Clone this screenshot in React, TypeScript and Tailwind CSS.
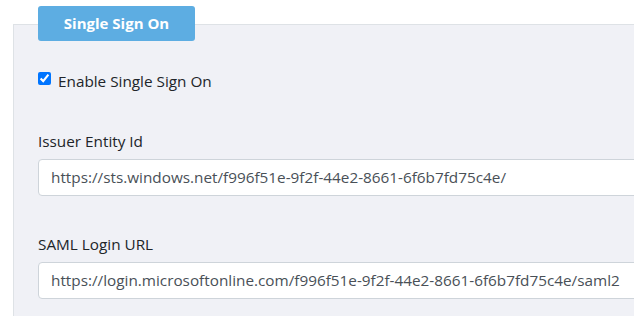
export default function App() {
  return (
    <div
      className="w-[634px] h-[316px] overflow-hidden bg-white pt-[24px]"
      style={{ fontFamily: '"Open Sans", "Noto Sans", sans-serif' }}
    >
      <div className="ml-[13px] h-[400px] border-l border-t border-[#dee2e6] bg-[#f0f1f6] pl-[24px]">
        <div className="-mt-[19px] flex h-[35px] w-[157px] items-center justify-center rounded-[3px] bg-[#5dade2] text-[15px] font-bold text-white">
          Single Sign On
        </div>

        <label className="mt-[27px] flex items-start text-[15.3px] leading-[24px] text-[#212529]">
          <input
            type="checkbox"
            defaultChecked
            className="mt-[4px] h-[13px] w-[13px] accent-[#0075ff]"
          />
          <span className="ml-[7px] mt-[1px]">Enable Single Sign On</span>
        </label>

        <div className="mt-[36px] text-[15.3px] leading-[24px] text-[#212529]">
          Issuer Entity Id
        </div>
        <div className="mt-[6px] flex h-[37px] w-[620px] items-center rounded-l-[4px] border border-[#ced4da] bg-white pl-[12px] text-[15.3px] text-[#495057]">
          https://sts.windows.net/f996f51e-9f2f-44e2-8661-6f6b7fd75c4e/
        </div>

        <div className="mt-[36px] text-[15.3px] leading-[24px] text-[#212529]">
          SAML Login URL
        </div>
        <div className="mt-[6px] flex h-[37px] w-[620px] items-center rounded-l-[4px] border border-[#ced4da] bg-white pl-[12px] text-[15.3px] text-[#495057]">
          https://login.microsoftonline.com/f996f51e-9f2f-44e2-8661-6f6b7fd75c4e/saml2
        </div>
      </div>
    </div>
  );
}
